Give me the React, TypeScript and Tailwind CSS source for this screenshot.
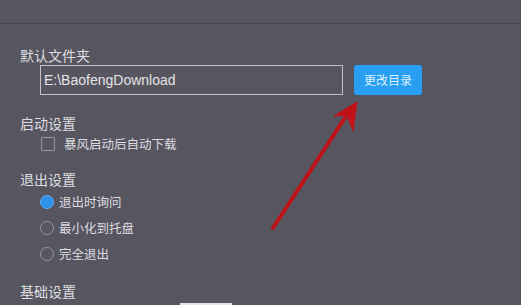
import React from "react";

const cjk = { fontFamily: '"Noto Sans CJK SC", "Noto Sans", sans-serif' };

export default function App() {
  return (
    <div
      className="relative w-[521px] h-[305px] overflow-hidden bg-[#57555f] text-[#dddde0]"
      style={cjk}
    >
      <div className="h-[24px] border-b border-[#45434b]" />
      <div className="pl-[20px]">
        <div className="mt-[23px] h-[16px] leading-[16px] text-[14px]">默认文件夹</div>
        <div className="mt-[2px] ml-[20px] flex items-center gap-[11px]">
          <div
            className="w-[303px] h-[30px] border border-[#c4c4c8] flex items-center pl-[3px] text-[14px] text-[#e4e4e6]"
            style={{ fontFamily: '"Liberation Sans", sans-serif' }}
          >
            E:\BaofengDownload
          </div>
          <div className="w-[68px] h-[30px] rounded-[2px] bg-[#27a0f2] flex items-center justify-center text-[12px] text-[#dcefff]">
            更改目录
          </div>
        </div>
        <div className="mt-[20px] h-[16px] leading-[16px] text-[14px]">启动设置</div>
        <div className="mt-[6px] ml-[21px] flex items-center gap-[9px] h-[14px]">
          <div className="w-[14px] h-[14px] border border-[#96959c] rounded-[1px]" />
          <span className="text-[12.5px] leading-[14px]">暴风启动后自动下载</span>
        </div>
        <div className="mt-[20px] h-[16px] leading-[16px] text-[14px]">退出设置</div>
        <div className="mt-[8px] ml-[20px] flex items-center gap-[5px] h-[14px]">
          <div className="w-[14px] h-[14px] rounded-full border border-[#5fb4f5] bg-[#2d8fe6] flex items-center justify-center">
            <div className="w-[8px] h-[8px] rounded-full bg-[#2f95ee]" />
          </div>
          <span className="text-[12.5px] leading-[14px]">退出时询问</span>
        </div>
        <div className="mt-[12px] ml-[20px] flex items-center gap-[5px] h-[14px]">
          <div className="w-[14px] h-[14px] rounded-full border border-[#96959c]" />
          <span className="text-[12.5px] leading-[14px]">最小化到托盘</span>
        </div>
        <div className="mt-[12px] ml-[20px] flex items-center gap-[5px] h-[14px]">
          <div className="w-[14px] h-[14px] rounded-full border border-[#96959c]" />
          <span className="text-[12.5px] leading-[14px]">完全退出</span>
        </div>
        <div className="mt-[22px] h-[16px] leading-[16px] text-[14px]">基础设置</div>
        <div className="mt-[4px] ml-[160px] w-[52px] h-[10px] bg-[#e6e6e8]" />
      </div>
      <svg
        className="absolute left-0 top-0 pointer-events-none"
        width="521"
        height="305"
        viewBox="0 0 521 305"
      >
        <line x1="273" y1="228" x2="350" y2="110" stroke="#c01219" strokeWidth="4" strokeLinecap="round" />
        <polygon points="357,102 334,116 347,115 353,131" fill="#c01219" strokeLinejoin="round" stroke="#c01219" strokeWidth="1" />
      </svg>
    </div>
  );
}
